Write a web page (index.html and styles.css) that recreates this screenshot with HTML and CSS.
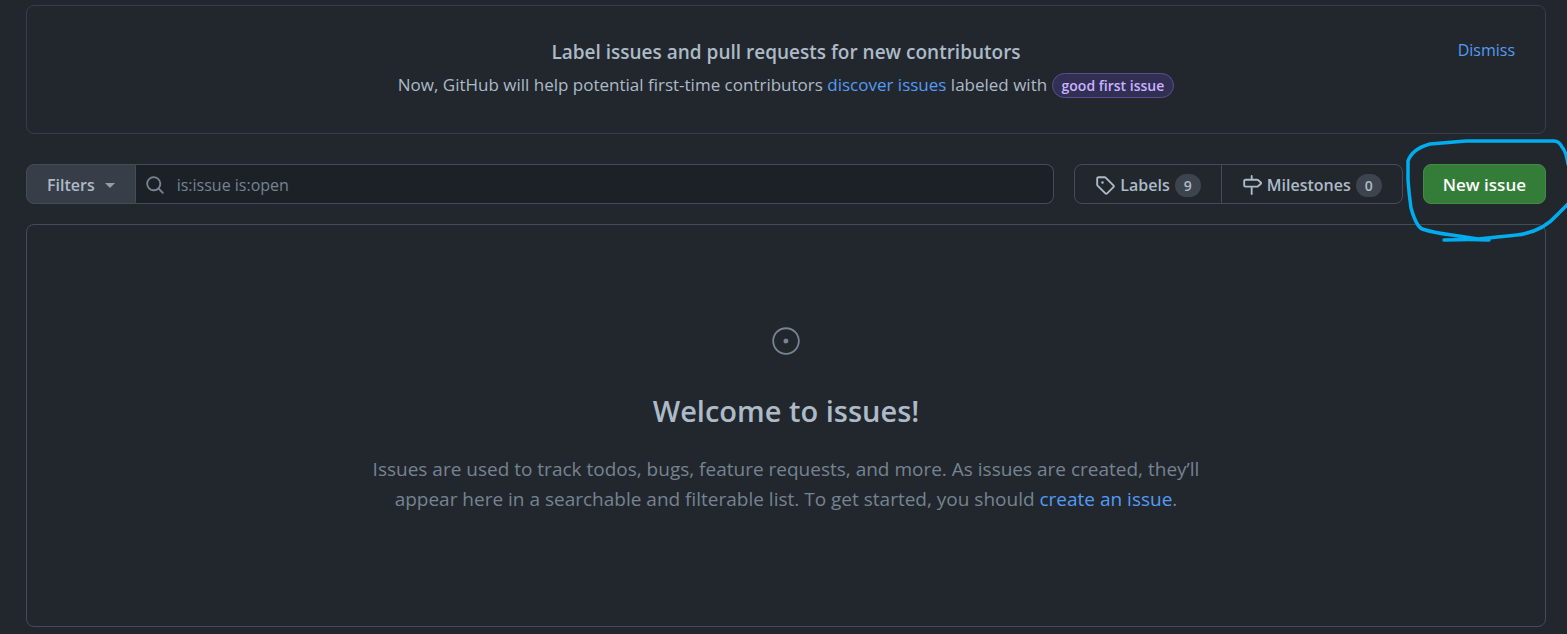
FILE: index.html
```html
<!DOCTYPE html>
<html lang="en">
<head>
<meta charset="utf-8">
<title>Issues</title>
<link rel="stylesheet" href="styles.css">
</head>
<body>
<main class="page">
  <section class="notice">
    <div class="notice-body">
      <h2 class="notice-title">Label issues and pull requests for new contributors</h2>
      <p class="notice-text">Now, GitHub will help potential first-time contributors <a class="link" href="#discover">discover issues</a> labeled with <span class="tag">good first issue</span></p>
    </div>
    <button class="dismiss" type="button">Dismiss</button>
  </section>

  <div class="toolbar">
    <form class="search">
      <button class="filters" type="button">Filters <span class="caret"></span></button>
      <div class="field">
        <svg class="icon" viewBox="0 0 16 16" aria-hidden="true"><path d="M10.68 11.74a6 6 0 0 1-7.922-8.982 6 6 0 0 1 8.982 7.922l3.04 3.04a.749.749 0 0 1-.326 1.275.749.749 0 0 1-.734-.215ZM11.5 7a4.499 4.499 0 1 0-8.997 0A4.499 4.499 0 0 0 11.5 7Z"/></svg>
        <input class="query" type="text" value="is:issue is:open" aria-label="Search all issues">
      </div>
    </form>
    <nav class="subnav">
      <a class="subnav-item" href="#labels">
        <svg class="icon" viewBox="0 0 16 16" aria-hidden="true"><path d="M1 7.775V2.75C1 1.784 1.784 1 2.75 1h5.025c.464 0 .91.184 1.238.513l6.25 6.25a1.75 1.75 0 0 1 0 2.474l-5.026 5.026a1.75 1.75 0 0 1-2.474 0l-6.25-6.25A1.752 1.752 0 0 1 1 7.775Zm1.5 0c0 .066.026.13.073.177l6.25 6.25a.25.25 0 0 0 .354 0l5.025-5.025a.25.25 0 0 0 0-.354l-6.25-6.25a.25.25 0 0 0-.177-.073H2.75a.25.25 0 0 0-.25.25ZM6 5a1 1 0 1 1 0 2 1 1 0 0 1 0-2Z"/></svg>
        <span>Labels</span><span class="counter">9</span>
      </a>
      <a class="subnav-item" href="#milestones">
        <svg class="icon" viewBox="0 0 16 16" aria-hidden="true"><path d="M7.75 0a.75.75 0 0 1 .75.75V3h3.634c.414 0 .814.147 1.13.414l2.07 1.75a1.75 1.75 0 0 1 0 2.672l-2.07 1.75a1.75 1.75 0 0 1-1.13.414H8.5v5.25a.75.75 0 0 1-1.5 0V10H2.75A1.75 1.75 0 0 1 1 8.25v-3.5C1 3.784 1.784 3 2.75 3H7V.75A.75.75 0 0 1 7.75 0Zm4.384 8.5a.25.25 0 0 0 .161-.06l2.07-1.75a.248.248 0 0 0 0-.38l-2.07-1.75a.25.25 0 0 0-.161-.06H2.75a.25.25 0 0 0-.25.25v3.5c0 .138.112.25.25.25Z"/></svg>
        <span>Milestones</span><span class="counter">0</span>
      </a>
    </nav>
    <div class="new">
      <button class="new-issue" type="button">New issue</button>
      <svg class="scribble" viewBox="0 0 162 106" aria-hidden="true"><path stroke-width="3.5" d="M163 30Q161 17 157 13Q154 7 149 7H61L25 10Q7 15 3 27V46Q4 60 6 74Q11 92 17 95Q30 99 47 101L73 105L112 101Q137 98 152 81L164 69M39 106Q66 105 84 106"/></svg>
    </div>
  </div>

  <section class="blank">
    <svg class="blank-icon" viewBox="0 0 24 24" aria-hidden="true"><path d="M12 1c6.075 0 11 4.925 11 11s-4.925 11-11 11S1 18.075 1 12 5.925 1 12 1ZM2.5 12a9.5 9.5 0 0 0 9.5 9.5 9.5 9.5 0 0 0 9.5-9.5A9.5 9.5 0 0 0 12 2.5 9.5 9.5 0 0 0 2.5 12Zm9.5 2a2 2 0 1 1-.001-3.999A2 2 0 0 1 12 14Z"/></svg>
    <h1 class="blank-title">Welcome to issues!</h1>
    <p class="blank-text">Issues are used to track todos, bugs, feature requests, and more. As issues are created, they’ll appear here in a searchable and filterable list. To get started, you should <a class="link create" href="#new">create an issue</a>.</p>
  </section>
</main>
</body>
</html>
```
FILE: styles.css
```css
* { box-sizing: border-box; }

body {
  margin: 0;
  background: #22272e;
  color: #adbac7;
  font: 16px/26px "Open Sans", "Noto Sans", sans-serif;
  overflow-x: hidden;
}

h1, h2, p { margin: 0; }
button, input { font: inherit; color: inherit; margin: 0; }
button { cursor: pointer; }

.page { padding: 5px 21px 6px 26px; }

.link { color: #539bf5; text-decoration: none; }

.notice {
  position: relative;
  padding: 32px;
  border: 1px solid #373e47;
  border-radius: 8px;
  text-align: center;
}
.notice-title { font-size: 19px; line-height: 28px; font-weight: 600; }
.notice-text { padding: 6px 0 3px; font-size: 17px; }
.tag {
  display: inline-block;
  padding: 0 9px;
  border: 1px solid #59508a;
  border-radius: 13px;
  background: #312f53;
  color: #cbb2ff;
  font-size: 14px;
  line-height: 23px;
  font-weight: 600;
}
.dismiss {
  position: absolute;
  top: 31px;
  right: 30px;
  padding: 0;
  border: 0;
  background: none;
  color: #539bf5;
}

.toolbar { display: flex; gap: 20px; margin: 30px 0 20px; height: 40px; }
.search { display: flex; flex: 1; min-width: 0; }
.filters {
  display: flex;
  align-items: center;
  gap: 10px;
  padding: 2px 20px 0;
  border: 1px solid #444c56;
  border-radius: 8px 0 0 8px;
  background: #373e47;
  font-weight: 600;
}
.caret {
  border: 5px solid transparent;
  border-top-color: #909dab;
  border-bottom: 0;
}
.field {
  display: flex;
  flex: 1;
  align-items: center;
  gap: 12px;
  min-width: 0;
  padding: 2px 9px 0;
  border: 1px solid #444c56;
  border-left: 0;
  border-radius: 0 8px 8px 0;
  background: #1c2128;
  color: #768390;
}
.query { flex: 1; min-width: 0; padding: 0; border: 0; outline: 0; background: none; }
.icon { flex: none; width: 20px; height: 20px; fill: currentColor; }

.subnav { display: flex; border: 1px solid #444c56; border-radius: 8px; }
.subnav-item {
  display: flex;
  align-items: center;
  gap: 5px;
  padding: 2px 20px 0;
  color: #adbac7;
  font-weight: 600;
  text-decoration: none;
}
.subnav-item + .subnav-item { border-left: 1px solid #444c56; }
.counter {
  padding: 0 9px;
  border-radius: 12px;
  background: #3d444d;
  font-size: 14px;
  line-height: 23px;
}

.new { position: relative; display: flex; }
.new-issue {
  padding: 2px 19px 0;
  border: 1px solid #46894a;
  border-radius: 8px;
  background: #347d39;
  color: #fff;
  font-size: 17px;
  font-weight: 600;
}
.scribble {
  position: absolute;
  top: -30px;
  left: -18px;
  width: 162px;
  height: 106px;
  overflow: visible;
  fill: none;
  stroke: #00adef;
  stroke-linecap: round;
  stroke-linejoin: round;
  pointer-events: none;
}

.blank {
  padding: 101px 40px 112px;
  border: 1px solid #444c56;
  border-radius: 8px;
  text-align: center;
}
.blank-icon { display: block; width: 30px; height: 30px; margin: 0 auto 36px; fill: #768390; }
.blank-title { font-size: 29px; line-height: 38px; font-weight: 600; }
.blank-text {
  max-width: 850px;
  margin: 24px auto 0;
  color: #768390;
  font-size: 19px;
  line-height: 30px;
}
.create { font-weight: 500; }
```
